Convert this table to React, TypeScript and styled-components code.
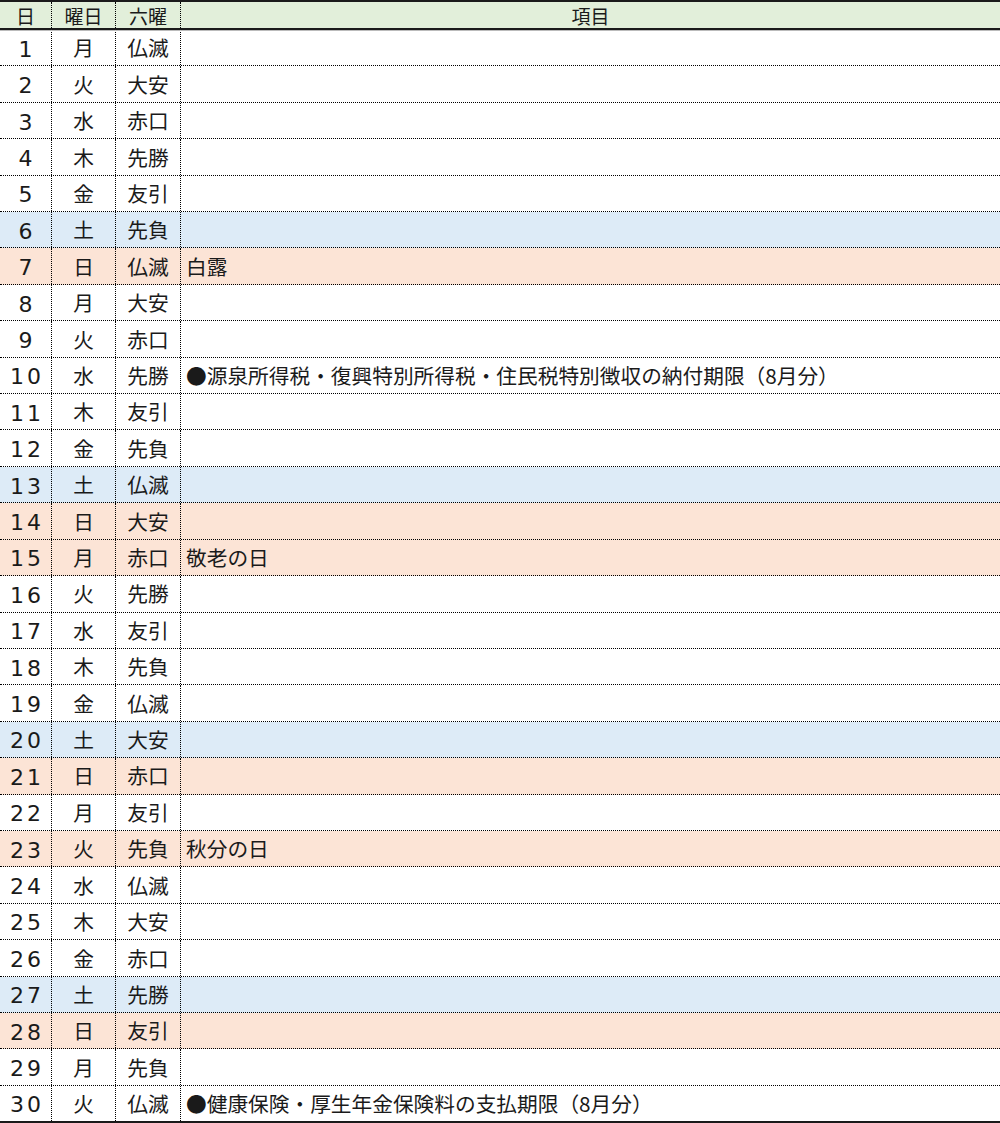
import styled, { createGlobalStyle } from 'styled-components';

type Kind = 'weekday' | 'sat' | 'holiday';

interface DayRow {
    day: number;
    weekday: string;
    rokuyo: string;
    item?: string;
    kind?: Kind;
}

const rows: DayRow[] = [
    { day: 1, weekday: '月', rokuyo: '仏滅' },
    { day: 2, weekday: '火', rokuyo: '大安' },
    { day: 3, weekday: '水', rokuyo: '赤口' },
    { day: 4, weekday: '木', rokuyo: '先勝' },
    { day: 5, weekday: '金', rokuyo: '友引' },
    { day: 6, weekday: '土', rokuyo: '先負', kind: 'sat' },
    { day: 7, weekday: '日', rokuyo: '仏滅', item: '白露', kind: 'holiday' },
    { day: 8, weekday: '月', rokuyo: '大安' },
    { day: 9, weekday: '火', rokuyo: '赤口' },
    {
        day: 10,
        weekday: '水',
        rokuyo: '先勝',
        item: '●源泉所得税・復興特別所得税・住民税特別徴収の納付期限（8月分）',
    },
    { day: 11, weekday: '木', rokuyo: '友引' },
    { day: 12, weekday: '金', rokuyo: '先負' },
    { day: 13, weekday: '土', rokuyo: '仏滅', kind: 'sat' },
    { day: 14, weekday: '日', rokuyo: '大安', kind: 'holiday' },
    { day: 15, weekday: '月', rokuyo: '赤口', item: '敬老の日', kind: 'holiday' },
    { day: 16, weekday: '火', rokuyo: '先勝' },
    { day: 17, weekday: '水', rokuyo: '友引' },
    { day: 18, weekday: '木', rokuyo: '先負' },
    { day: 19, weekday: '金', rokuyo: '仏滅' },
    { day: 20, weekday: '土', rokuyo: '大安', kind: 'sat' },
    { day: 21, weekday: '日', rokuyo: '赤口', kind: 'holiday' },
    { day: 22, weekday: '月', rokuyo: '友引' },
    { day: 23, weekday: '火', rokuyo: '先負', item: '秋分の日', kind: 'holiday' },
    { day: 24, weekday: '水', rokuyo: '仏滅' },
    { day: 25, weekday: '木', rokuyo: '大安' },
    { day: 26, weekday: '金', rokuyo: '赤口' },
    { day: 27, weekday: '土', rokuyo: '先勝', kind: 'sat' },
    { day: 28, weekday: '日', rokuyo: '友引', kind: 'holiday' },
    { day: 29, weekday: '月', rokuyo: '先負' },
    { day: 30, weekday: '火', rokuyo: '仏滅', item: '●健康保険・厚生年金保険料の支払期限（8月分）' },
];

const rowColors: Record<Kind, string> = {
    weekday: '#ffffff',
    sat: '#ddebf7',
    holiday: '#fce4d6',
};

const GlobalStyle = createGlobalStyle`
    html, body {
        margin: 0;
        padding: 0;
        background: #ffffff;
    }
    body {
        font-family: "Noto Sans CJK JP", "Noto Sans", sans-serif;
        color: #1a1a1a;
    }
`;

const Table = styled.div`
    width: 1000px;
    height: 1123px;
    display: flex;
    flex-direction: column;
    border-top: 2px solid #1a1a1a;
    border-bottom: 2px solid #1a1a1a;
    box-sizing: border-box;
`;

const Row = styled.div<{ $bg: string; $last?: boolean }>`
    flex: 1;
    min-height: 0;
    display: grid;
    grid-template-columns: 52px 64px 65px 1fr;
    background: ${({ $bg }) => $bg};
    border-bottom: ${({ $last }) => ($last ? 'none' : '1px dotted #000')};
`;

const HeaderRow = styled(Row)`
    flex: 0 0 26px;
    border-bottom: 2px solid #1a1a1a;
    box-shadow: 0 1px 0 #bbb;
    position: relative;
`;

const Cell = styled.div<{ $align?: 'center' | 'left'; $divider?: boolean }>`
    display: flex;
    align-items: center;
    justify-content: ${({ $align }) => ($align === 'left' ? 'flex-start' : 'center')};
    padding: ${({ $align }) => ($align === 'left' ? '0 0 0 5px' : '0')};
    border-right: ${({ $divider }) => ($divider ? '1px dotted #000' : 'none')};
    font-size: 20.7px;
    line-height: 1;
    white-space: nowrap;
    overflow: hidden;
`;

const HeadCell = styled(Cell)`
    font-size: 19px;
    overflow: visible;
`;

const DayNum = styled(Cell)`
    font-family: "DejaVu Sans", "Noto Sans", sans-serif;
    font-size: 22px;
    letter-spacing: 3px;
    padding: 4px 0 0 3px;
`;

export default function App() {
    return (
        <>
            <GlobalStyle />
            <Table>
                <HeaderRow $bg="#e2efda">
                    <HeadCell $divider>日</HeadCell>
                    <HeadCell $divider>曜日</HeadCell>
                    <HeadCell $divider>六曜</HeadCell>
                    <HeadCell>項目</HeadCell>
                </HeaderRow>
                {rows.map((r, i) => (
                    <Row key={r.day} $bg={rowColors[r.kind ?? 'weekday']} $last={i === rows.length - 1}>
                        <DayNum $divider>{r.day}</DayNum>
                        <Cell $divider>{r.weekday}</Cell>
                        <Cell $divider>{r.rokuyo}</Cell>
                        <Cell $align="left">{r.item}</Cell>
                    </Row>
                ))}
            </Table>
        </>
    );
}
